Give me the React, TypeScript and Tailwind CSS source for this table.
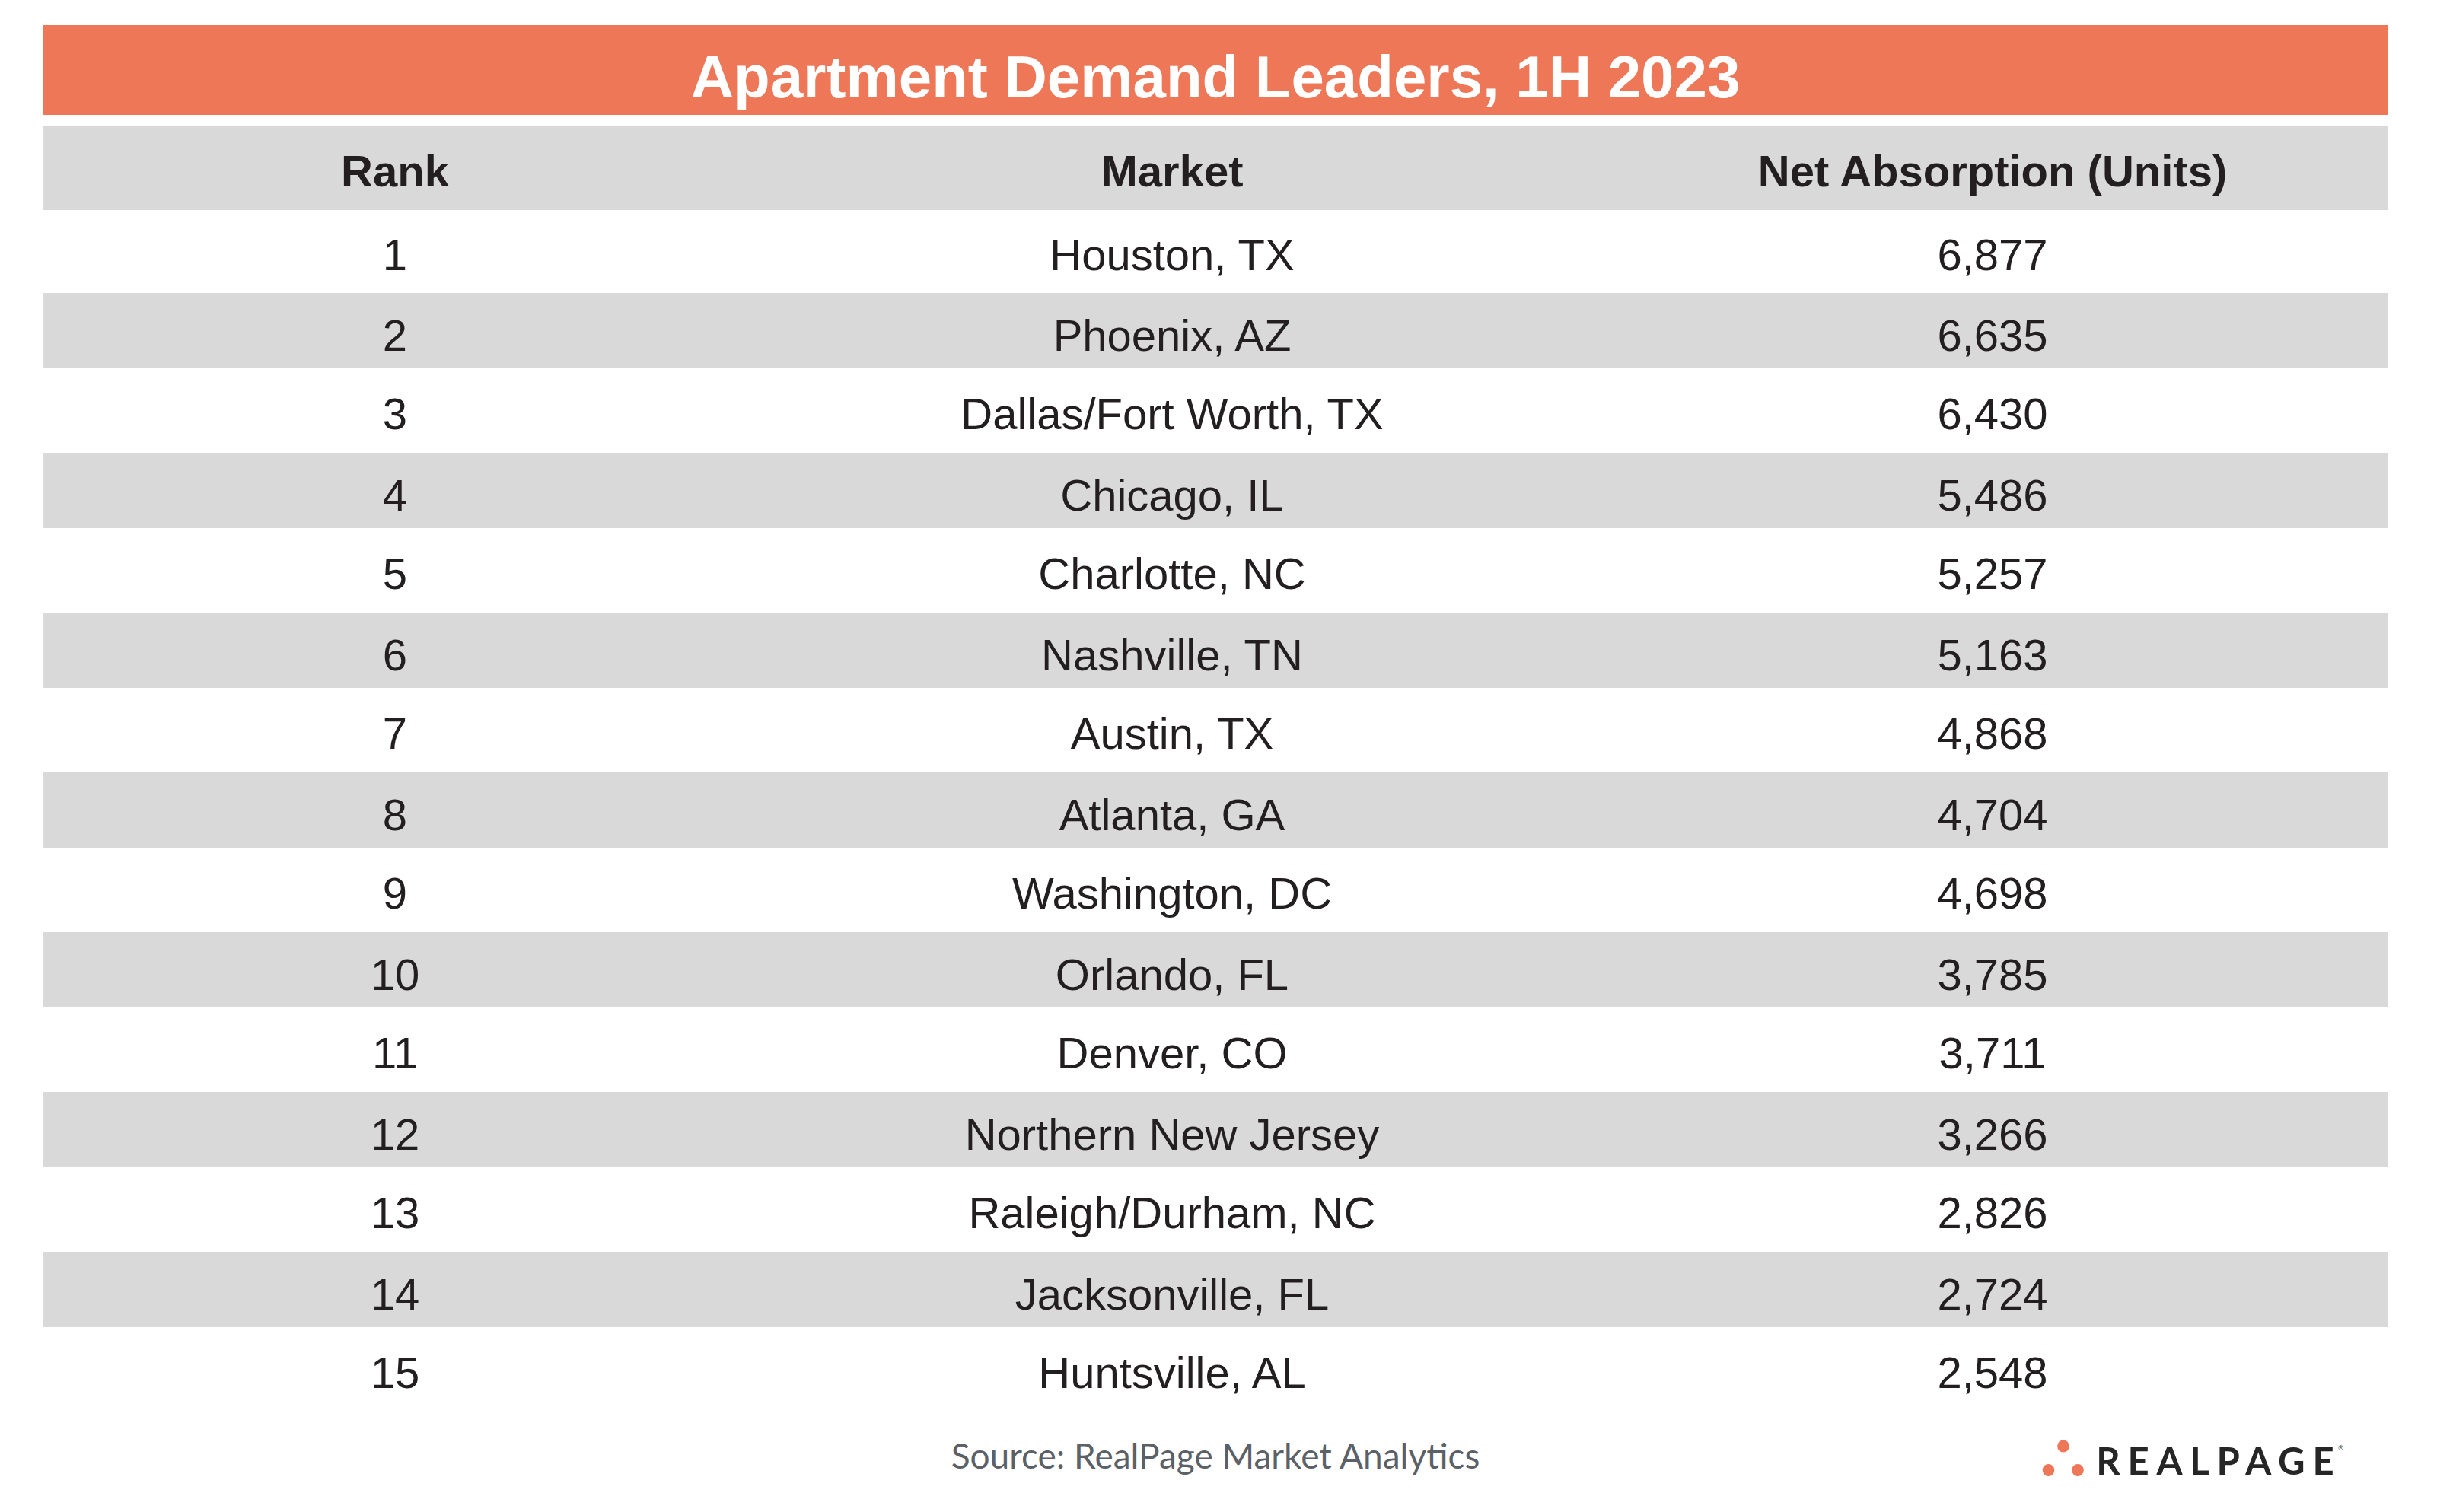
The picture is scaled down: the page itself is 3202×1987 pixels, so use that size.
import React from 'react';

const rows = [
  ['1', 'Houston, TX', '6,877'],
  ['2', 'Phoenix, AZ', '6,635'],
  ['3', 'Dallas/Fort Worth, TX', '6,430'],
  ['4', 'Chicago, IL', '5,486'],
  ['5', 'Charlotte, NC', '5,257'],
  ['6', 'Nashville, TN', '5,163'],
  ['7', 'Austin, TX', '4,868'],
  ['8', 'Atlanta, GA', '4,704'],
  ['9', 'Washington, DC', '4,698'],
  ['10', 'Orlando, FL', '3,785'],
  ['11', 'Denver, CO', '3,711'],
  ['12', 'Northern New Jersey', '3,266'],
  ['13', 'Raleigh/Durham, NC', '2,826'],
  ['14', 'Jacksonville, FL', '2,724'],
  ['15', 'Huntsville, AL', '2,548'],
];

function RealPageLogo() {
  return (
    <div className="flex items-start">
      <svg width="58" height="50" viewBox="0 0 58 50" className="mt-[2px]">
        <ellipse cx="9.5" cy="41" rx="7.8" ry="8" fill="#ee7757" />
        <ellipse cx="48" cy="41" rx="7.8" ry="8" fill="#ee7757" />
        <ellipse cx="29" cy="9.5" rx="7.8" ry="8" fill="#ee7757" />
      </svg>
      <span className="ml-[14px] mt-[6px] font-['Lato',sans-serif] font-bold text-[49px] leading-none tracking-[0.2em] text-[#262626]">
        REALPAGE
      </span>
      <span className="-ml-[4px] mt-[10px] text-[9px] leading-none text-[#262626]">®</span>
    </div>
  );
}

export default function App() {
  return (
    <div className="w-[3202px] h-[1987px] bg-white pt-[33px] pl-[57px] pr-[65px] font-['Liberation_Sans',Arial,sans-serif] text-[#231f20]">
      {/* Título */}
      <div className="h-[118px] bg-[#ed7756] flex items-center justify-center pt-[17px]">
        <h1 className="text-white font-bold text-[78px] leading-none">Apartment Demand Leaders, 1H 2023</h1>
      </div>

      {/* Cabeçalho */}
      <div className="mt-[15px] h-[110px] bg-[#d9d9d9] grid grid-cols-[924px_1118px_1fr] items-center pt-[7px] font-bold text-[58px] leading-none">
        <div className="text-center">Rank</div>
        <div className="text-center">Market</div>
        <div className="text-center">Net Absorption (Units)</div>
      </div>

      {/* Linhas */}
      {rows.map(([rank, market, units], i) => {
        const gray = i % 2 === 1;
        const cls = gray
          ? 'h-[99px] bg-[#d9d9d9] pt-[12px]'
          : i === 0
            ? 'h-[109px] bg-white pt-[9px]'
            : 'h-[111px] bg-white pt-[8px]';
        return (
          <div key={rank} className={`${cls} grid grid-cols-[924px_1118px_1fr] items-center text-[58px] leading-none`}>
            <div className="text-center">{rank}</div>
            <div className="text-center">{market}</div>
            <div className="text-center">{units}</div>
          </div>
        );
      })}

      {/* Rodapé */}
      <div className="grid grid-cols-[1fr_auto_1fr] pt-[35px]">
        <div />
        <div className="font-['Lato',sans-serif] text-[46px] leading-none text-[#5b6166]">
          Source: RealPage Market Analytics
        </div>
        <div className="justify-self-end mr-[58px] -mt-[1px]">
          <RealPageLogo />
        </div>
      </div>
    </div>
  );
}
